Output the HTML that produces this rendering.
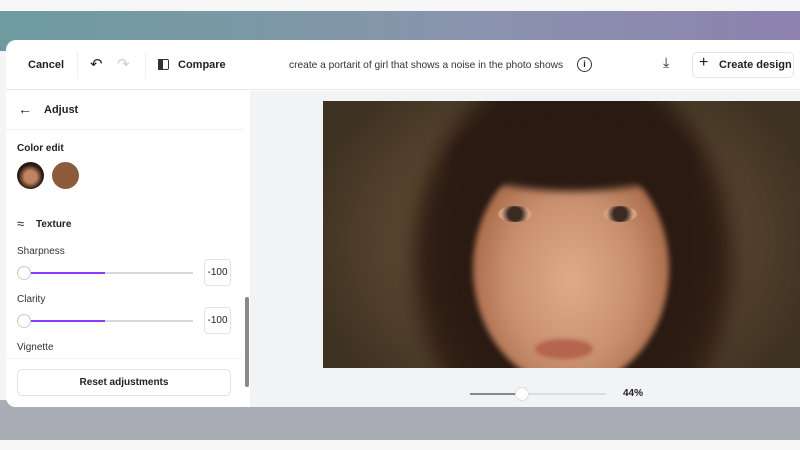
<!DOCTYPE html>
<html><head><style>
*{box-sizing:border-box;margin:0;padding:0}
html,body{width:800px;height:450px;overflow:hidden}
body{background:#f5f5f6;font-family:"Liberation Sans",sans-serif;position:relative;color:#222}
.top{position:absolute;left:0;top:0;width:800px;height:11px;background:#f6f6f7}
.grad{position:absolute;left:0;top:11px;width:800px;height:40px;background:linear-gradient(90deg,#6e9aa0,#7b99a6 30%,#8a93ad 60%,#8d82b0)}
.under{position:absolute;left:0;top:400px;width:800px;height:40px;background:#a9acb4}
.bot{position:absolute;left:0;top:440px;width:800px;height:10px;background:#f6f6f7}
.modal{position:absolute;left:6px;top:40px;width:794px;height:367px;background:#fff;border-radius:10px 0 0 10px;overflow:hidden}
.hdr{position:absolute;left:0;top:0;width:100%;height:50px;border-bottom:1px solid #e8e8ea;font-size:11px;font-weight:bold}
.hdr span{position:absolute;top:19px}
.left{position:absolute;left:0;top:51px;width:244px;height:316px;background:#fff}
.right{position:absolute;left:244px;top:51px;width:550px;height:316px;background:#f2f3f5}
.photo{position:absolute;left:317px;top:61px;width:477px;height:267px;overflow:hidden;background:
radial-gradient(ellipse 260px 200px at 240px 140px,#6b5538,#5a4630 60%,#3e3222);}
.photo div{position:absolute;border-radius:50%}
.lbl{position:absolute;left:11px;font-size:10px;color:#333}
.slider{position:absolute;left:11px;width:176px;height:2px;background:#d8d8dc}
.slider i{position:absolute;left:0;top:0;width:88px;height:2px;background:#8b3dff}
.slider b{position:absolute;left:0;top:-6px;width:14px;height:14px;border-radius:50%;background:#fff;border:1px solid #ccc}
.val{position:absolute;left:198px;width:27px;height:27px;border:1px solid #e3e3e6;border-radius:4px;font-size:10px;text-align:center;line-height:25px}
</style></head><body>
<div class="top"></div><div class="grad"></div><div class="under"></div><div class="bot"></div>
<div class="modal">
 <div class="hdr">
  <span style="left:22px">Cancel</span>
  <div style="position:absolute;left:71px;top:12px;width:1px;height:26px;background:#eee"></div>
  <span style="left:84px;top:15px;font-size:15px;font-weight:normal">&#8630;</span>
  <span style="left:111px;top:15px;font-size:15px;font-weight:normal;color:#ccc">&#8631;</span>
  <div style="position:absolute;left:139px;top:12px;width:1px;height:26px;background:#eee"></div>
  <div style="position:absolute;left:152px;top:19px;width:5px;height:11px;background:#333"></div>
  <div style="position:absolute;left:157px;top:19px;width:6px;height:11px;border:1.5px solid #333;border-left:none;border-radius:0 2px 2px 0"></div>
  <span style="left:172px">Compare</span>
  <span style="left:283px;top:20px;font-size:10.2px;font-weight:normal;color:#333">create a portarit of girl that shows a noise in the photo shows</span>
  <div style="position:absolute;left:571px;top:17px;width:15px;height:15px;border:1.5px solid #333;border-radius:50%;font-size:9px;text-align:center;line-height:12px">i</div>
  <span style="left:657px;top:14px;font-size:14px;font-weight:normal">&#10515;</span>
  <div style="position:absolute;left:686px;top:12px;width:102px;height:26px;border:1px solid #e5e5e8;border-radius:5px"></div>
  <span style="left:693px;top:14px;font-size:16px;font-weight:normal">+</span>
  <span style="left:713px">Create design</span>
 </div>
 <div class="left">
  <span style="position:absolute;left:12px;top:10px;font-size:14px">&#8592;</span>
  <span style="position:absolute;left:38px;top:13px;font-size:11px;font-weight:bold">Adjust</span>
  <div style="position:absolute;left:0;top:38px;width:236px;height:1px;background:#eee"></div>
  <span style="position:absolute;left:11px;top:52px;font-size:10px;font-weight:bold">Color edit</span>
  <div style="position:absolute;left:11px;top:71px;width:27px;height:27px;border-radius:50%;background:radial-gradient(circle at 50% 55%,#c08560 30%,#2a1a12 60%)"></div>
  <div style="position:absolute;left:46px;top:71px;width:27px;height:27px;border-radius:50%;background:#8d5a3a"></div>
  <span style="position:absolute;left:11px;top:125px;font-size:13px">&#8776;</span>
  <span style="position:absolute;left:30px;top:128px;font-size:10px;font-weight:bold">Texture</span>
  <span class="lbl" style="top:155px">Sharpness</span>
  <div class="slider" style="top:181px"><i></i><b></b></div>
  <div class="val" style="top:168px">-100</div>
  <span class="lbl" style="top:203px">Clarity</span>
  <div class="slider" style="top:229px"><i></i><b></b></div>
  <div class="val" style="top:216px">-100</div>
  <span class="lbl" style="top:251px">Vignette</span>
  <div style="position:absolute;left:0;top:267px;width:236px;height:49px;background:#fff;border-top:1px solid #f0f0f0"></div>
  <div style="position:absolute;left:11px;top:278px;width:214px;height:27px;border:1px solid #e3e3e6;border-radius:5px;font-size:10px;font-weight:bold;text-align:center;line-height:25px">Reset adjustments</div>
  <div style="position:absolute;left:239px;top:206px;width:4px;height:90px;background:#888;border-radius:2px"></div>
 </div>
 <div class="right"></div>
 <div class="photo">
  <div style="left:90px;top:-40px;width:320px;height:400px;filter:blur(10px);background:radial-gradient(ellipse at 50% 45%,#2a1a12 55%,#3a2618 80%,rgba(60,40,25,0) 100%)"></div>
  <div style="left:150px;top:50px;width:196px;height:235px;filter:blur(3px);background:radial-gradient(ellipse at 50% 55%,#deab88,#c99070 45%,#a86a48 75%,#7a4a30 100%)"></div>
  <div style="left:130px;top:20px;width:240px;height:70px;filter:blur(4px);background:#2a1a12"></div>
  <div style="left:175px;top:105px;width:34px;height:16px;background:radial-gradient(circle,#3a2a22 35%,#d2a080 70%)"></div>
  <div style="left:280px;top:105px;width:34px;height:16px;background:radial-gradient(circle,#3a2a22 35%,#d2a080 70%)"></div>
  <div style="left:212px;top:238px;width:58px;height:20px;filter:blur(2px);background:#b5644e"></div>
 </div>
 <div style="position:absolute;left:464px;top:353px;width:136px;height:2px;background:#ddd"></div>
 <div style="position:absolute;left:464px;top:353px;width:50px;height:2px;background:#888"></div>
 <div style="position:absolute;left:509px;top:347px;width:14px;height:14px;border-radius:50%;background:#fff;border:1px solid #ddd"></div>
 <span style="position:absolute;left:617px;top:348px;font-size:10px;font-weight:bold">44%</span>
</div>
</body></html>
